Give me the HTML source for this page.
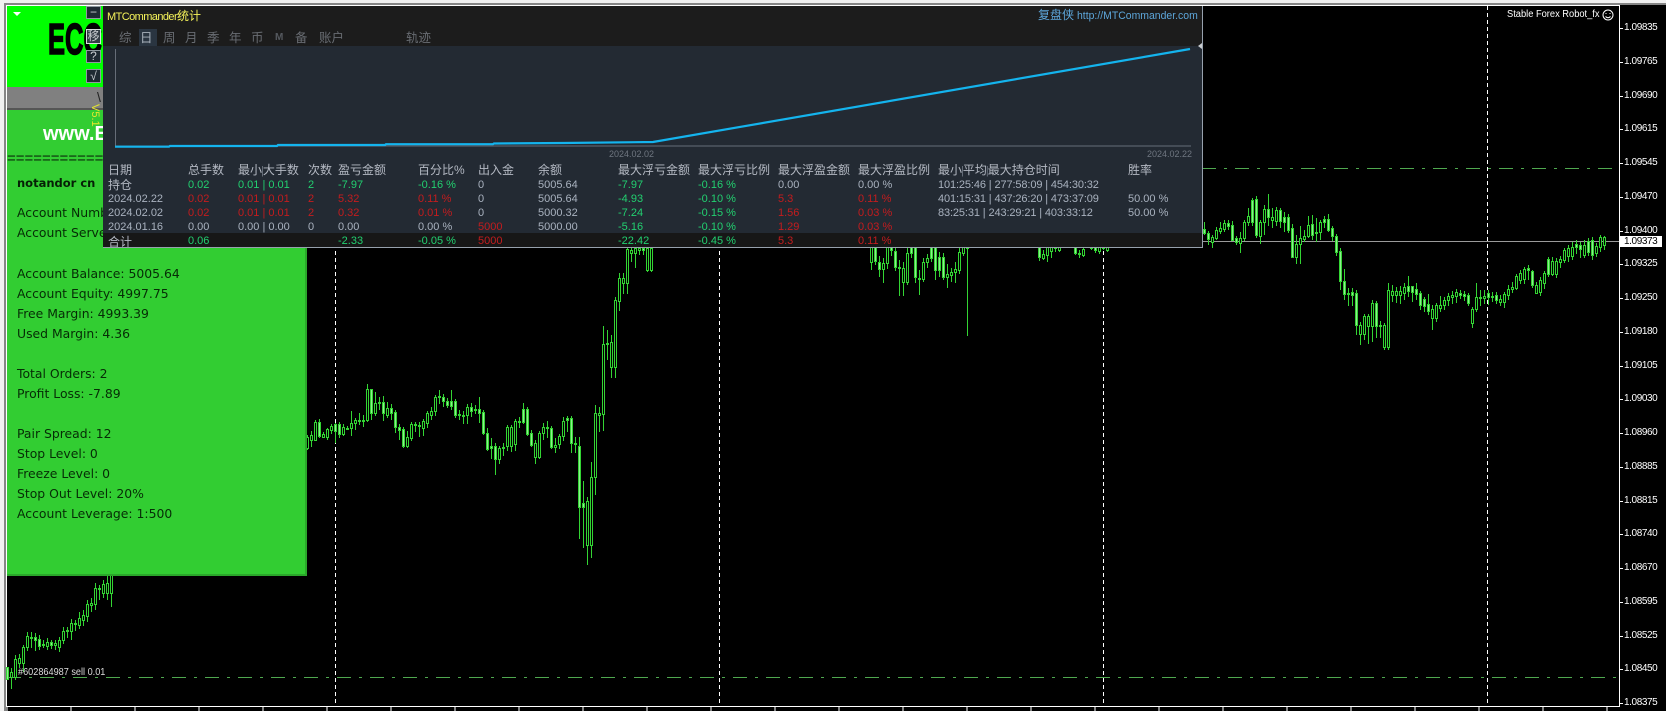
<!DOCTYPE html>
<html><head><meta charset="utf-8"><title>MTCommander</title>
<style>
html,body{margin:0;padding:0;background:#000;}
body{width:1666px;height:711px;position:relative;overflow:hidden;font-family:"Liberation Sans","Noto Sans CJK SC",sans-serif;}
div,span{position:absolute;white-space:nowrap;}
#left{left:7px;top:6px;width:300px;height:570px;background:#32cd32;overflow:hidden;box-shadow:inset -2px -2px 0 #2aa82a;}
#left .t{left:10px;font:12.4px/16px "DejaVu Sans",sans-serif;color:#062c06;}
.btn{left:79px;width:13px;background:#1f2a33;border:1px solid #8f9aa0;color:#c8ccd0;font-size:12px;line-height:12px;text-align:center;}
#panel{left:103px;top:6px;width:1099px;height:241px;background:#232a33;border-right:1px solid #97a1ad;border-bottom:1px solid #97a1ad;overflow:hidden;}
.tab{top:24px;font-size:12.5px;line-height:16px;color:#686c72;}
.r{font-size:11px;line-height:14px;color:#a9b2bf;height:14px;width:1099px;left:0;}
.r span{top:0;}
.h{font-size:12px;color:#b4b9c3;}
.a{left:5px}.b{left:85px}.c{left:135px}.d{left:205px}.e{left:235px}.f{left:315px}.g{left:375px}.i{left:435px}.j{left:515px}.k{left:595px}.l{left:675px}.m{left:755px}.n{left:835px}.o{left:1025px}
.r .n{letter-spacing:-.12px}
.G{color:#22d070}.R{color:#c41c1e}
.p{left:1624px;font-size:10px;line-height:12px;letter-spacing:-.4px;color:#fff;}
</style></head><body>
<svg id="ch" width="1666" height="711" style="position:absolute;left:0;top:0" shape-rendering="crispEdges">
<rect width="1666" height="711" fill="#000"/>
<rect x="0" y="0" width="1666" height="3" fill="#f0f0f0"/>
<rect x="0" y="3" width="1666" height="2" fill="#858585"/>
<rect x="0" y="0" width="4" height="711" fill="#f0f0f0"/>
<rect x="4" y="3" width="2" height="708" fill="#858585"/>
<rect x="6" y="5" width="1614" height="1" fill="#fff"/>
<rect x="6" y="5" width="1" height="702" fill="#fff"/>
<rect x="1619" y="5" width="1" height="702" fill="#fff"/>
<rect x="6" y="706" width="1614" height="1" fill="#fff"/>
<path d="M7 707v4M71 707v4M135 707v4M199 707v4M263 707v4M327 707v4M391 707v4M455 707v4M519 707v4M583 707v4M647 707v4M711 707v4M775 707v4M839 707v4M903 707v4M967 707v4M1031 707v4M1095 707v4M1159 707v4M1223 707v4M1287 707v4M1351 707v4M1415 707v4M1479 707v4M1543 707v4M1607 707v4" stroke="#fff"/>
<g stroke="#fff" stroke-dasharray="4 3" stroke-width="1">
<path d="M335.5 6V704M719.5 6V704M1103.5 6V704M1487.5 6V704"/>
</g>
<g stroke="#4fa84f" stroke-dasharray="14 8 3 8">
<path d="M7 677.5H1619M1202 168.5H1619"/>
</g>
<path d="M1202 241.5H1619" stroke="#9a9a9a"/>
<path id="wk" fill="none" stroke="#33d433"/>
<path id="bu" fill="#000" stroke="#33d433"/>
<path id="be" fill="#8fee8f" stroke="#33d433"/>
<path d="M1620 28.5h3M1620 62.5h3M1620 96.5h3M1620 129.5h3M1620 163.5h3M1620 197.5h3M1620 231.5h3M1620 264.5h3M1620 298.5h3M1620 332.5h3M1620 366.5h3M1620 399.5h3M1620 433.5h3M1620 467.5h3M1620 501.5h3M1620 534.5h3M1620 568.5h3M1620 602.5h3M1620 636.5h3M1620 669.5h3M1620 703.5h3" stroke="#fff"/>
</svg>

<div style="left:1507px;top:9px;font-size:10px;line-height:12px;color:#fff;transform:scaleX(.93);transform-origin:0 0;">Stable Forex Robot_fx</div>
<svg width="14" height="14" style="position:absolute;left:1601px;top:8px"><circle cx="7" cy="7" r="5" fill="none" stroke="#fff"/><path d="M4.5 8.5q2.5 2.5 5 0" fill="none" stroke="#fff"/><path d="M5 5v1M9 5v1" stroke="#fff"/></svg>
<div style="left:18px;top:666px;font-size:10.5px;line-height:12px;color:#ddd;transform:scaleX(.87);transform-origin:0 0;">#602864987 sell 0.01</div>

<div class="p" style="top:22px">1.09835</div><div class="p" style="top:56px">1.09765</div><div class="p" style="top:90px">1.09690</div><div class="p" style="top:123px">1.09615</div><div class="p" style="top:157px">1.09545</div><div class="p" style="top:191px">1.09470</div><div class="p" style="top:225px">1.09400</div><div class="p" style="top:258px">1.09325</div><div class="p" style="top:292px">1.09250</div><div class="p" style="top:326px">1.09180</div><div class="p" style="top:360px">1.09105</div><div class="p" style="top:393px">1.09030</div><div class="p" style="top:427px">1.08960</div><div class="p" style="top:461px">1.08885</div><div class="p" style="top:495px">1.08815</div><div class="p" style="top:528px">1.08740</div><div class="p" style="top:562px">1.08670</div><div class="p" style="top:596px">1.08595</div><div class="p" style="top:630px">1.08525</div><div class="p" style="top:663px">1.08450</div><div class="p" style="top:697px">1.08375</div>
<div style="left:1620px;top:236px;width:42px;height:11px;background:#fff;color:#000;font-size:10px;line-height:11px;letter-spacing:-.4px;padding-left:4px;box-sizing:border-box;">1.09373</div>

<div id="left">
<div style="left:0;top:0;width:300px;height:81px;background:#00ff00;"></div>
<div style="left:6px;top:6px;width:0;height:0;border-left:4px solid transparent;border-right:4px solid transparent;border-top:4px solid #fff;"></div>
<div style="left:41px;top:11px;font:bold 44px/46px 'Liberation Sans',sans-serif;color:#000;-webkit-text-stroke:1.5px #000;transform:scaleX(.58);transform-origin:0 0;">ECC</div>
<div class="btn" style="top:0;height:11px;line-height:10px;">−</div>
<div class="btn" style="top:23px;height:13px;line-height:13px;border-color:#d8dcdf;background:#333d45;">移</div>
<div class="btn" style="top:44px;height:11px;line-height:11px;">?</div>
<div class="btn" style="top:63px;height:12px;line-height:12px;">√</div>
<div style="left:0;top:81px;width:300px;height:21px;background:#808080;border-bottom:2px solid #555;"></div>
<div style="left:90px;top:83px;font-size:14px;line-height:16px;color:#222;">\</div>
<div style="left:83px;top:98px;font-size:11px;line-height:11px;color:#e6e62e;transform:rotate(90deg);transform-origin:5px 5px;">V5.1</div>
<div style="left:36px;top:116px;font:bold 20px/24px 'Liberation Sans',sans-serif;color:#fff;">www.ECN</div>
<div style="left:0;top:145px;font-size:15px;line-height:16px;color:#0c2c0c;letter-spacing:0;">=======================</div>
<div class="t" style="top:169px;left:10px;font-weight:bold;font-size:11.5px;color:#062006;">notandor cn</div>
<div class="t" style="top:199px">Account Number: 602864987</div>
<div class="t" style="top:219px">Account Server: MetaQuotes</div>
<div class="t" style="top:260px">Account Balance: 5005.64</div>
<div class="t" style="top:280px">Account Equity: 4997.75</div>
<div class="t" style="top:300px">Free Margin: 4993.39</div>
<div class="t" style="top:320px">Used Margin: 4.36</div>
<div class="t" style="top:360px">Total Orders: 2</div>
<div class="t" style="top:380px">Profit Loss: -7.89</div>
<div class="t" style="top:420px">Pair Spread: 12</div>
<div class="t" style="top:440px">Stop Level: 0</div>
<div class="t" style="top:460px">Freeze Level: 0</div>
<div class="t" style="top:480px">Stop Out Level: 20%</div>
<div class="t" style="top:500px">Account Leverage: 1:500</div>
</div>

<div id="panel">
<div style="left:0;top:0;width:1099px;height:40px;background:#1c1c1c;"></div>
<div style="left:4px;top:2px;font-size:12px;line-height:16px;color:#f6f35a;"><span style="position:static;font-size:11px;letter-spacing:-.58px">MTCommander</span>统计</div>
<div style="left:935px;top:1px;font-size:12px;line-height:16px;color:#5da6da;">复盘侠</div>
<div style="left:974px;top:2px;font-size:11px;line-height:16px;color:#5da6da;transform:scaleX(.95);transform-origin:0 0;">http://MTCommander.com</div>
<div style="left:36px;top:23px;width:18px;height:17px;background:#2a3541;"></div>
<div class="tab" style="left:16px">综</div>
<div class="tab" style="left:37px;color:#a9b2bd">日</div>
<div class="tab" style="left:60px">周</div>
<div class="tab" style="left:82px">月</div>
<div class="tab" style="left:104px">季</div>
<div class="tab" style="left:126px">年</div>
<div class="tab" style="left:148px">币</div>
<div class="tab" style="left:172px;font-size:10px;font-weight:bold;color:#55595f">M</div>
<div class="tab" style="left:192px">备</div>
<div class="tab" style="left:216px">账户</div>
<div class="tab" style="left:303px">轨迹</div>
<svg width="1099" height="150" style="position:absolute;left:0;top:0" >
<path d="M12.5 43V140H1088" fill="none" stroke="#666d78" shape-rendering="crispEdges"/>
<polyline points="12,140.7 66,140.7 67,140 174,140 175,139 282,139 283,138.2 390,138.2 391,137.5 460,137 550,136 1087,43" fill="none" stroke="#14b4ee" stroke-width="2.2"/>
<path d="M1095 40l4-3v6z" fill="#c8ccd0"/>
</svg>
<div style="left:506px;top:142px;font-size:9px;line-height:12px;color:#6f7680;">2024.02.02</div>
<div style="left:1044px;top:142px;font-size:9px;line-height:12px;color:#6f7680;">2024.02.22</div>

<div class="r h" style="top:157px"><span class="a">日期</span><span class="b">总手数</span><span class="c">最小<span style="position:static;font-size:11px;margin:0 -1px;color:#6d7580">|</span>大手数</span><span class="d">次数</span><span class="e">盈亏金额</span><span class="f">百分比%</span><span class="g">出入金</span><span class="i">余额</span><span class="j">最大浮亏金额</span><span class="k">最大浮亏比例</span><span class="l">最大浮盈金额</span><span class="m">最大浮盈比例</span><span class="n" style="letter-spacing:0">最小<span style="position:static;font-size:11px;margin:0 -1px;color:#6d7580">|</span>平均<span style="position:static;font-size:11px;margin:0 -1px;color:#6d7580">|</span>最大持仓时间</span><span class="o">胜率</span></div>
<div class="r" style="top:172px"><span class="a h">持仓</span><span class="b G">0.02</span><span class="c G">0.01 | 0.01</span><span class="d G">2</span><span class="e G">-7.97</span><span class="f G">-0.16 %</span><span class="g">0</span><span class="i">5005.64</span><span class="j G">-7.97</span><span class="k G">-0.16 %</span><span class="l">0.00</span><span class="m">0.00 %</span><span class="n">101:25:46 | 277:58:09 | 454:30:32</span></div>
<div class="r" style="top:186px"><span class="a">2024.02.22</span><span class="b R">0.02</span><span class="c R">0.01 | 0.01</span><span class="d R">2</span><span class="e R">5.32</span><span class="f R">0.11 %</span><span class="g">0</span><span class="i">5005.64</span><span class="j G">-4.93</span><span class="k G">-0.10 %</span><span class="l R">5.3</span><span class="m R">0.11 %</span><span class="n">401:15:31 | 437:26:20 | 473:37:09</span><span class="o">50.00 %</span></div>
<div class="r" style="top:200px"><span class="a">2024.02.02</span><span class="b R">0.02</span><span class="c R">0.01 | 0.01</span><span class="d R">2</span><span class="e R">0.32</span><span class="f R">0.01 %</span><span class="g">0</span><span class="i">5000.32</span><span class="j G">-7.24</span><span class="k G">-0.15 %</span><span class="l R">1.56</span><span class="m R">0.03 %</span><span class="n">83:25:31 | 243:29:21 | 403:33:12</span><span class="o">50.00 %</span></div>
<div class="r" style="top:214px"><span class="a">2024.01.16</span><span class="b">0.00</span><span class="c">0.00 | 0.00</span><span class="d">0</span><span class="e">0.00</span><span class="f">0.00 %</span><span class="g R">5000</span><span class="i">5000.00</span><span class="j G">-5.16</span><span class="k G">-0.10 %</span><span class="l R">1.29</span><span class="m R">0.03 %</span></div>
<div style="left:0;top:227px;width:1099px;height:14px;background:#171717;overflow:hidden;">
<div class="r" style="top:1px"><span class="a h" style="top:1px">合计</span><span class="b G">0.06</span><span class="e G">-2.33</span><span class="f G">-0.05 %</span><span class="g R">5000</span><span class="j G">-22.42</span><span class="k G">-0.45 %</span><span class="l R">5.3</span><span class="m R">0.11 %</span></div>
</div>
</div>

<script>
var S=[
[7,"667-679 672-677/668-689 659-677/655-680 658-663/654-668 647-663/645-672 636-647/632-651 637-638/632-648 637-640/633-651 639-646/635-650 644-645/640-648 642-646/638-650 642-645/640-649 643-645/640-650 640-647/637-652 631-640/627-644 630-631/627-638 623-631/619-640 623-624/620-631 618-625/612-629 615-620/610-626 604-616/600-622 603-605/598-612 588-604/583-610 588-589/585-600 584-593/580-598 583-593/575-600 575-593/570-607"],
[307,"437-448/435-450 435-440/431-447 422-440/420-441 422-436/419-438 434-437/432-438 429-437/428-440 426-430/424-434 424-431/423-443 424-434/422-438 427-434/424-436 428-428/426-430 423-428/411-436 420-423/418-430 420-420/413-425 420-420/415-427 389-420/384-422 389-413/389-420 403-413/392-416 402-403/397-410 402-413/396-421 408-415/402-418 408-413/404-420 412-427/410-433 427-430/424-440 429-446/427-448 437-446/431-448 424-438/422-441 424-425/422-432 425-426/422-437 421-428/419-436 413-423/411-428 411-415/407-420 397-411/395-416 396-397/390-404 397-401/394-407 401-405/398-408 401-406/390-410 401-415/399-418 414-415/410-420 415-416/411-424 407-415/404-424 407-411/403-417 409-410/405-414 409-413/397-423 412-433/410-435 433-449/428-451 446-448/438-459 446-459/443-475 448-459/446-464 447-448/443-456 427-446/425-451 427-446/425-452 421-444/419-451 421-422/417-428 409-422/403-424 409-434/407-436 433-445/430-447 443-457/440-464 433-457/431-459 427-433/423-440 427-428/421-438 428-447/426-449 445-447/438-453 436-444/434-449 421-436/417-441 418-420/416-432 418-443/416-453 443-444/437-453 446-507/437-539 503-507/481-548 501-545/497-565 477-545/462-558 413-477/405-495 413-415/407-432 344-414/326-431 343-344/330-360 342-367/335-378 300-367/297-378 278-301/273-311 278-283/273-294 249-283/248-294 250-253/248-262 248-253/248-268 248-250/248-255 248-250/248-255 248-270/248-272 248-270/248-272"],
[871,"240-262/230-270 240-261/236-265 262-269/256-277 263-269/258-283 240-263/236-269 240-250/236-256 251-267/247-271 267-268/260-296 268-282/262-296 253-282/248-285 240-253/236-258 240-277/236-283 278-279/270-295 262-279/258-282 258-262/254-268 240-258/236-262 240-270/236-280 257-270/252-277 257-277/253-280 274-277/264-288 272-275/268-282 269-272/262-283 252-270/248-274 240-253/236-256 240-248/236-336"],
[1039,"240-257/236-261 254-258/250-260 245-255/240-262 240-251/236-258 240-248/236-252 240-250/236-252"],
[1075,"240-253/236-255 253-254/250-258 249-255/245-257"],
[1091,"240-248/236-250 240-250/236-253 240-251/236-254 240-248/236-250 240-250/236-252"],
[1204,"229-233/222-235 233-239/231-245 237-242/235-248 230-238/227-240 228-231/222-234 223-229/220-232 223-226/220-230 225-240/221-241 238-242/236-245 238-243/232-253 222-238/220-241 216-222/208-226 200-222/198-226 199-235/196-238 222-236/220-244 209-222/205-235 209-217/194-226 217-220/208-228 210-221/207-226 210-221/208-228 217-222/212-232 217-230/214-233 228-257/224-258 244-257/235-264 238-244/226-264 236-239/230-242 225-236/216-238 224-235/215-240 232-233/218-242 222-232/220-240 219-222/216-228 219-230/214-232 228-236/226-241 236-252/234-256 251-281/248-290 281-294/269-300 293-294/288-306 292-295/288-306 293-325/290-335 325-334/322-345 316-334/314-340 316-326/314-344 303-326/300-342 303-326/301-338 325-326/321-338 325-347/323-350 290-347/283-350 291-295/285-302 291-295/287-303 291-295/286-304 287-293/283-300 286-291/276-297 286-292/286-302 289-294/283-300 293-305/291-310 299-306/297-312 304-311/294-315 309-318/305-330 305-318/303-322 305-308/296-312 300-305/297-310 296-300/293-306 295-297/291-304 292-296/289-303 293-295/290-299 294-296/291-301 295-303/293-306 309-323/307-328 297-309/283-312 297-298/290-306 296-298/290-304 293-297/290-305 296-297/292-302 295-300/292-304 299-302/295-306 294-302/292-308 289-295/285-300 287-289/282-293 276-288/274-290 273-280/270-284 269-279/267-284 268-270/265-280 271-285/270-288 285-293/282-294 280-292/277-296 273-283/271-289 259-274/257-277 261-274/257-276 261-274/258-278 259-262/256-268 250-260/248-263 248-256/245-262 247-256/242-260 244-247/240-254 245-249/242-258 245-255/240-258 241-252/238-256 240-255/237-260 246-253/243-257 237-247/235-252 237-245/236-250"]];
var w="",u="",e="";
S.forEach(function(s){var x=s[0],a=s[1].split(" ").map(function(c){var q=c.split("/"),b=q[0].split("-").map(Number),k=(q[1]||q[0]).split("-").map(Number);return[b[0],b[1],k[0],k[1]]});
a.forEach(function(c,i){var X=x+i*4,n=a[i+1]||c,m=(c[0]+c[1])/2,nm=(n[0]+n[1])/2,h=Math.max(c[1]-c[0],1);
w+="M"+(X+.5)+" "+c[2]+"V"+c[3];
var r="M"+(X-.5)+" "+(c[0]+.5)+"h2v"+h+"h-2z";
if(nm>m)e+=r;else u+=r;});});
document.getElementById("wk").setAttribute("d",w);
document.getElementById("bu").setAttribute("d",u);
document.getElementById("be").setAttribute("d",e);
</script>
</body></html>
